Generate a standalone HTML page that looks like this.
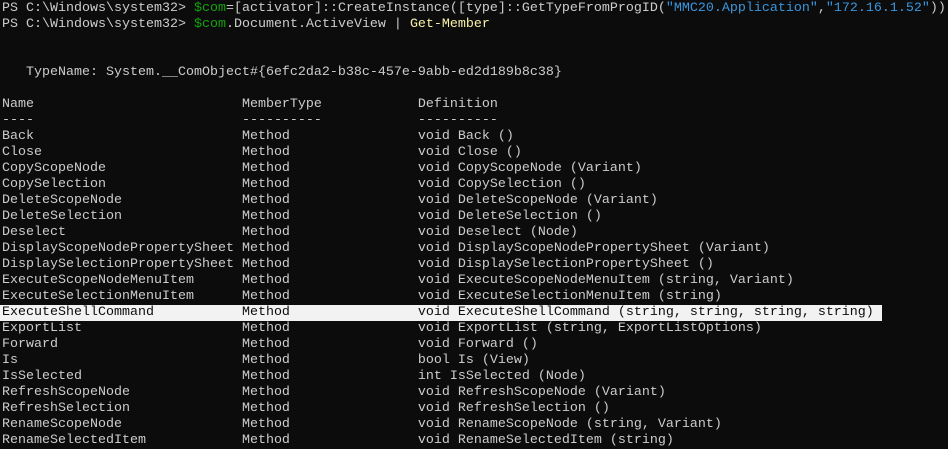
<!DOCTYPE html>
<html><head><meta charset="utf-8"><style>
html,body{margin:0;padding:0;background:#0c0c0c;width:948px;height:447px;overflow:hidden}
pre{margin:0;position:absolute;top:1px;left:2px;font-family:"Liberation Mono",monospace;font-size:13.33px;line-height:16px;color:#cccccc;white-space:pre}
.g{color:#13a10e}.y{color:#f9f1a5}.b{color:#3a96dd}
.hl{display:inline-block;vertical-align:top;height:16px;background:#f2f2f2;color:#0c0c0c;width:880px;margin-left:-2px;padding-left:2px}
</style></head><body><pre>PS C:\Windows\system32&gt; <span class="g">$com</span>=[activator]::CreateInstance([type]::GetTypeFromProgID(<span class="b">"MMC20.Application"</span>,<span class="b">"172.16.1.52"</span>))
PS C:\Windows\system32&gt; <span class="g">$com</span>.Document.ActiveView | <span class="y">Get-Member</span>


   TypeName: System.__ComObject#{6efc2da2-b38c-457e-9abb-ed2d189b8c38}

Name                          MemberType            Definition
----                          ----------            ----------
Back                          Method                void Back ()
Close                         Method                void Close ()
CopyScopeNode                 Method                void CopyScopeNode (Variant)
CopySelection                 Method                void CopySelection ()
DeleteScopeNode               Method                void DeleteScopeNode (Variant)
DeleteSelection               Method                void DeleteSelection ()
Deselect                      Method                void Deselect (Node)
DisplayScopeNodePropertySheet Method                void DisplayScopeNodePropertySheet (Variant)
DisplaySelectionPropertySheet Method                void DisplaySelectionPropertySheet ()
ExecuteScopeNodeMenuItem      Method                void ExecuteScopeNodeMenuItem (string, Variant)
ExecuteSelectionMenuItem      Method                void ExecuteSelectionMenuItem (string)
<span class="hl">ExecuteShellCommand           Method                void ExecuteShellCommand (string, string, string, string)</span>
ExportList                    Method                void ExportList (string, ExportListOptions)
Forward                       Method                void Forward ()
Is                            Method                bool Is (View)
IsSelected                    Method                int IsSelected (Node)
RefreshScopeNode              Method                void RefreshScopeNode (Variant)
RefreshSelection              Method                void RefreshSelection ()
RenameScopeNode               Method                void RenameScopeNode (string, Variant)
RenameSelectedItem            Method                void RenameSelectedItem (string)
</pre></body></html>
